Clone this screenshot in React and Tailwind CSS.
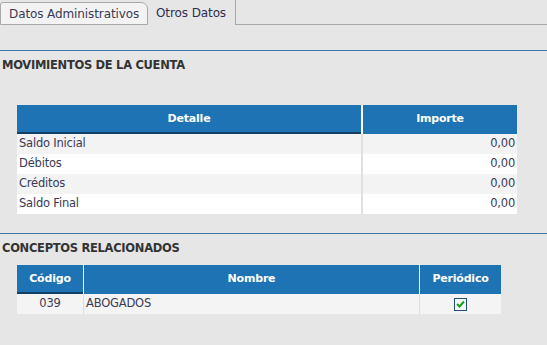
const movimientos = [
  { detalle: 'Saldo Inicial', importe: '0,00' },
  { detalle: 'Débitos', importe: '0,00' },
  { detalle: 'Créditos', importe: '0,00' },
  { detalle: 'Saldo Final', importe: '0,00' },
];

const conceptos = [{ codigo: '039', nombre: 'ABOGADOS', periodico: true }];

const SectionTitle = ({ children }) => (
  <div className="border-t border-[#3f78a8] pt-[7px] pl-[2px] h-[20px] text-[11.5px] leading-[14px] font-bold text-[#333] tracking-[-0.3px]">
    {children}
  </div>
);

const Check = () => (
  <span className="inline-flex w-[13px] h-[13px] items-center justify-center border border-[#1f4f7a] bg-[#f4f7f4]">
    <svg width="9" height="8" viewBox="0 0 9 8">
      <path d="M1 4 L3.5 6.5 L8 1.5" fill="none" stroke="#1aa11a" strokeWidth="2" />
    </svg>
  </span>
);

const HeadCell = ({ className = '', sorted, children }) => (
  <div className={`flex items-center justify-center h-full font-bold ${sorted ? 'shadow-[inset_0_-2px_0_#133f63]' : ''} ${className}`}>
    {children}
  </div>
);

export default function App() {
  return (
    <div className="w-[547px] h-[345px] bg-[#e6e6e6] text-[#3a3a55] overflow-hidden" style={{ fontFamily: '"DejaVu Sans", sans-serif' }}>
      {/* tabs */}
      <div className="flex items-end h-[25px]">
        <div className="h-[23px] w-[148px] bg-[#f3f3f3] border border-[#a8a8a8] rounded-tr-[7px] rounded-tl-[3px] flex items-center pl-[8px] text-[12px] tracking-[-0.1px]">
          Datos Administrativos
        </div>
        <div className="h-[25px] w-[88px] border-r border-[#a8a8a8] flex items-center pl-[8px] text-[12px] tracking-[-0.1px] text-[#2d2d50]">
          Otros Datos
        </div>
        <div className="flex-1 border-b border-[#a8a8a8]" />
      </div>

      <div className="mt-[25px]">
        <SectionTitle>MOVIMIENTOS DE LA CUENTA</SectionTitle>
      </div>

      {/* movimientos */}
      <div className="ml-[17px] mt-[35px] w-[500px] text-[11.5px] tracking-[-0.2px]">
        <div className="flex h-[29px] bg-[#1e73b5] text-white text-[11px]">
          <HeadCell sorted className="w-[344px]">Detalle</HeadCell>
          <div className="w-[2px] bg-white" />
          <HeadCell className="flex-1">Importe</HeadCell>
        </div>
        {movimientos.map((m, i) => (
          <div key={m.detalle} className={`flex h-[20px] items-center ${i % 2 === 0 ? 'bg-[#f3f3f3]' : 'bg-white'}`}>
            <div className="w-[344px] pl-[2px]">{m.detalle}</div>
            <div className="w-[2px] h-full bg-[#e0e0e0]" />
            <div className="flex-1 text-right pr-[2px]">{m.importe}</div>
          </div>
        ))}
      </div>

      <div className="mt-[19px]">
        <SectionTitle>CONCEPTOS RELACIONADOS</SectionTitle>
      </div>

      {/* conceptos */}
      <div className="ml-[17px] mt-[12px] w-[484px] text-[11.5px] tracking-[-0.2px]">
        <div className="flex h-[29px] bg-[#1e73b5] text-white text-[11px]">
          <HeadCell sorted className="w-[66px]">Código</HeadCell>
          <div className="w-[1px] bg-white" />
          <HeadCell className="w-[335px]">Nombre</HeadCell>
          <div className="w-[1px] bg-white" />
          <HeadCell className="flex-1">Periódico</HeadCell>
        </div>
        {conceptos.map((c) => (
          <div key={c.codigo} className="flex h-[20px] items-center bg-[#f4f4f4]">
            <div className="w-[66px] text-center">{c.codigo}</div>
            <div className="w-[1px] h-full bg-[#dcdcdc]" />
            <div className="w-[335px] pl-[2px]">{c.nombre}</div>
            <div className="w-[1px] h-full bg-[#dcdcdc]" />
            <div className="flex-1 flex justify-center">{c.periodico && <Check />}</div>
          </div>
        ))}
      </div>
    </div>
  );
}
